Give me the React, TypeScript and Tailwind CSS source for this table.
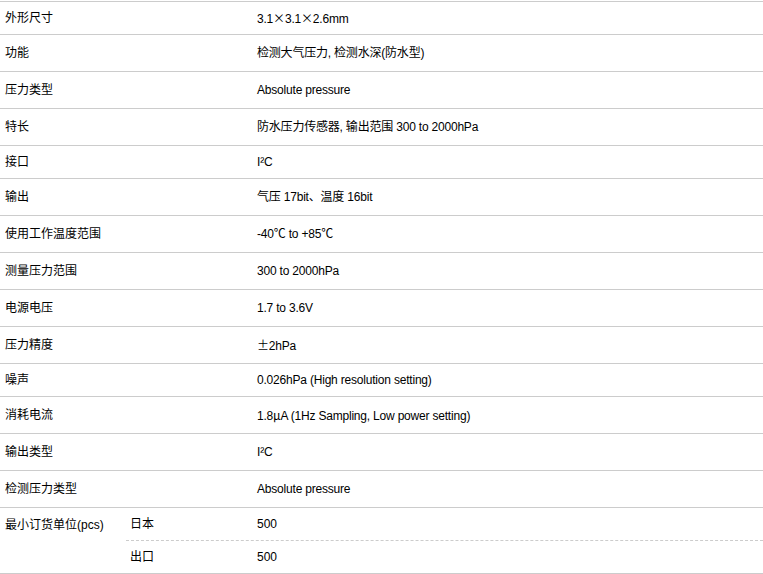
import React from 'react';

type Row = { label: string; value: React.ReactNode; tall: boolean };

// full-width glyphs as the CJK font draws them
const W = ({ children }: { children: React.ReactNode }) => (
  <span style={{ fontFamily: '"Noto Sans CJK JP", sans-serif' }}>{children}</span>
);

const rows: Row[] = [
  { label: '外形尺寸', value: <>3.1<W>×</W>3.1<W>×</W>2.6mm</>, tall: false },
  { label: '功能', value: '检测大气压力, 检测水深(防水型)', tall: true },
  { label: '压力类型', value: 'Absolute pressure', tall: true },
  { label: '特长', value: '防水压力传感器, 输出范围 300 to 2000hPa', tall: true },
  { label: '接口', value: 'I²C', tall: false },
  { label: '输出', value: '气压 17bit、温度 16bit', tall: true },
  { label: '使用工作温度范围', value: '-40℃ to +85℃', tall: true },
  { label: '测量压力范围', value: '300 to 2000hPa', tall: true },
  { label: '电源电压', value: '1.7 to 3.6V', tall: true },
  { label: '压力精度', value: <><W>±</W>2hPa</>, tall: true },
  { label: '噪声', value: '0.026hPa (High resolution setting)', tall: false },
  { label: '消耗电流', value: <>1.8<W>μ</W>A (1Hz Sampling, Low power setting)</>, tall: true },
  { label: '输出类型', value: 'I²C', tall: true },
  { label: '检测压力类型', value: 'Absolute pressure', tall: true },
];

const font = {
  fontFamily: '"Liberation Sans", "Noto Sans CJK SC", sans-serif',
};

export default function App() {
  return (
    <div className="w-[763px] bg-white pt-px text-[12px] text-black" style={font}>
      <div className="border-t border-[#cccccc]">
        {rows.map((r) => (
          <div
            key={r.label}
            className={`flex items-center border-b border-[#cccccc] ${r.tall ? 'h-[37px]' : 'h-[33px]'}`}
          >
            <div className="w-[252px] shrink-0 pl-[5px]">{r.label}</div>
            <div className="pl-[5px] tracking-[-0.2px]">{r.value}</div>
          </div>
        ))}
        <div className="flex border-b border-[#cccccc]">
          <div className="w-[126px] shrink-0 pl-[5px] pt-[8px]">最小订货单位(pcs)</div>
          <div className="flex-1">
            <div className="flex h-[33px] items-center border-b border-dashed border-[#cccccc]">
              <div className="w-[126px] shrink-0 pl-[4px]">日本</div>
              <div className="pl-[5px]">500</div>
            </div>
            <div className="flex h-[32px] items-center">
              <div className="w-[126px] shrink-0 pl-[4px]">出口</div>
              <div className="pl-[5px]">500</div>
            </div>
          </div>
        </div>
      </div>
    </div>
  );
}
